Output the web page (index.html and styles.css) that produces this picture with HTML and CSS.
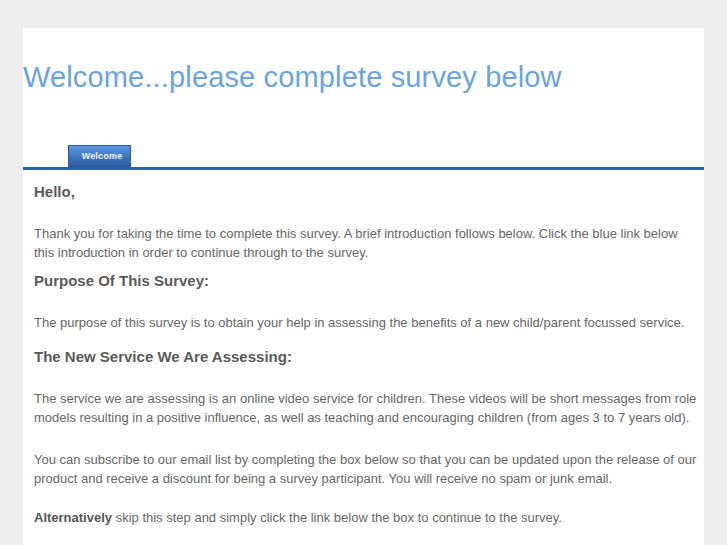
FILE: index.html
```html
<!DOCTYPE html>
<html lang="en">
<head>
  <meta charset="UTF-8" />
  <title>Welcome...please complete survey below</title>
  <link rel="stylesheet" href="styles.css">
</head>
<body>
  <div class="page">
    <header class="masthead">
      <h1>Welcome...please complete survey below</h1>
    </header>

    <nav class="tabs">
      <a href="#" class="tab">Welcome</a>
    </nav>

    <main class="content">
      <h3>Hello,</h3>
      <p class="tight">Thank you for taking the time to complete this survey. A brief introduction follows below. Click the blue link below this introduction in order to continue through to the survey.</p>

      <h3>Purpose Of This Survey:</h3>
      <p class="mid">The purpose of this survey is to obtain your help in assessing the benefits of a new child/parent focussed service.</p>

      <h3>The New Service We Are Assessing:</h3>
      <p class="wide">The service we are assessing is an online video service for children. These videos will be short messages from role models resulting in a positive influence, as well as teaching and encouraging children (from ages 3 to 7 years old).</p>

      <p class="snug">You can subscribe to our email list by completing the box below so that you can be updated upon the release of our product and receive a discount for being a survey participant. You will receive no spam or junk email.</p>

      <p><strong>Alternatively</strong> skip this step and simply click the link below the box to continue to the survey.</p>
    </main>
  </div>
</body>
</html>
```

FILE: styles.css
```css
body {
  margin: 0;
  background-color: #eeeeee;
  font-family: 'Liberation Sans', Arial, sans-serif;
  color: #666;
}
.page {
  margin: 28px 23px 0 23px;
  background-color: #fff;
  min-height: 517px;
}
.masthead {
  padding: 32px 0 0 0;
  height: 85px;
}
.masthead h1 {
  margin: 0;
  font-size: 29px;
  font-weight: normal;
  letter-spacing: 0.15px;
  line-height: 34px;
  color: #6aa3e2;
}
.tabs {
  padding-left: 45px;
  border-bottom: 3px solid #2c60a4;
  display: flex;
}
.tab {
  display: block;
  width: 56px;
  height: 21px;
  line-height: 21px;
  padding: 0 0 0 5px;
  text-align: center;
  font-size: 9px;
  font-weight: bold;
  letter-spacing: 0.2px;
  color: #eef3fb;
  text-decoration: none;
  border: 1px solid #2b5d9e;
  border-bottom: none;
  background: linear-gradient(#5d97de, #3d74bf 55%, #2a5b9e);
}
.content {
  padding: 12px 5px 8px 11px;
}
.content h3 {
  margin: 0 0 22px 0;
  font-size: 15px;
  line-height: 20px;
  color: #5a5a5a;
}
.content p {
  margin: 0 0 21px 0;
  font-size: 13px;
  line-height: 19px;
}
.content p.tight {
  margin-bottom: 9px;
}
.content p.mid {
  margin-bottom: 15px;
}
.content p.wide {
  margin-bottom: 23px;
}
.content p.snug {
  margin-bottom: 20px;
}
.content p:last-child {
  margin-bottom: 0;
}
.content strong {
  color: #555;
}
```
